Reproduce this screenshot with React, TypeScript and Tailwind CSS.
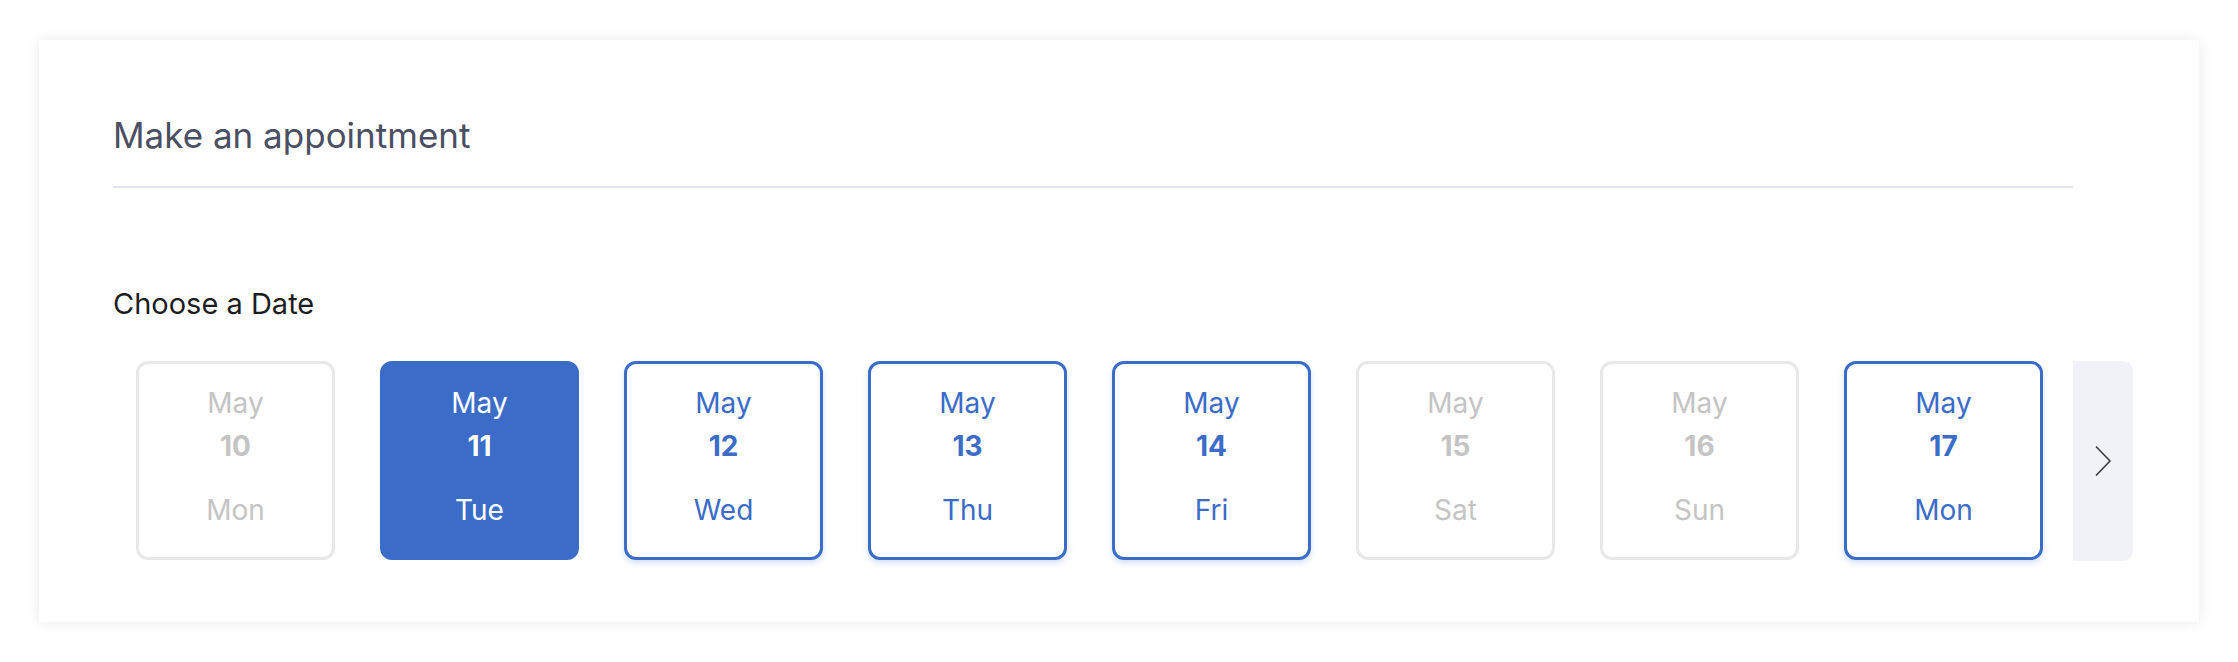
import React from "react";

type Day = { n: number; d: string; state: "disabled" | "selected" | "available" };

const days: Day[] = [
  { n: 10, d: "Mon", state: "disabled" },
  { n: 11, d: "Tue", state: "selected" },
  { n: 12, d: "Wed", state: "available" },
  { n: 13, d: "Thu", state: "available" },
  { n: 14, d: "Fri", state: "available" },
  { n: 15, d: "Sat", state: "disabled" },
  { n: 16, d: "Sun", state: "disabled" },
  { n: 17, d: "Mon", state: "available" },
];

function DayCard({ day }: { day: Day }) {
  const base =
    "w-[199px] h-[199px] shrink-0 rounded-[12px] border-[3px] flex flex-col items-center text-[28px] leading-[32px] pt-[23px]";
  const cls =
    day.state === "selected"
      ? "bg-[#3a6cc8] border-[#3a6cc8] text-white"
      : day.state === "available"
      ? "bg-white border-[#3a6cc8] text-[#3a6cc8] shadow-[0_3px_6px_rgba(58,108,200,0.22)]"
      : "bg-white border-[#e8e8e8] text-[#c4c4c4]";
  return (
    <div className={`${base} ${cls}`}>
      <div>May</div>
      <div className="mt-[11px] font-bold">{day.n}</div>
      <div className="mt-[32px]">{day.d}</div>
    </div>
  );
}

export default function App() {
  return (
    <div
      className="min-h-screen bg-white pt-[40px] pl-[39px]"
      style={{ fontFamily: "Inter, Roboto, 'Liberation Sans', sans-serif" }}
    >
      <div className="w-[2160px] h-[582px] bg-white shadow-[0_0_14px_rgba(0,0,0,0.09)] pl-[74px] pt-[73px]">
        <h1 className="text-[35px] leading-[44px] text-[#4b4f63] font-normal">Make an appointment</h1>
        <div className="mt-[29px] h-[2px] w-[1960px] bg-[#e1e4f0]" />
        <div className="mt-[98px] text-[29px] leading-[36px] text-[#1c1c21]">Choose a Date</div>
        <div className="mt-[39px] flex items-start pl-[23px]">
          <div className="flex gap-[45px]">
            {days.map((d) => (
              <DayCard key={d.n} day={d} />
            ))}
          </div>
          <div className="ml-[30px] w-[60px] h-[200px] bg-[#f1f2f7] rounded-r-[10px] flex items-center justify-center">
            <svg width="18" height="32" viewBox="0 0 18 32" fill="none">
              <path d="M2 1.5 L16 16 L2 30.5" stroke="#3d3d3d" strokeWidth="1.6" />
            </svg>
          </div>
        </div>
      </div>
    </div>
  );
}
